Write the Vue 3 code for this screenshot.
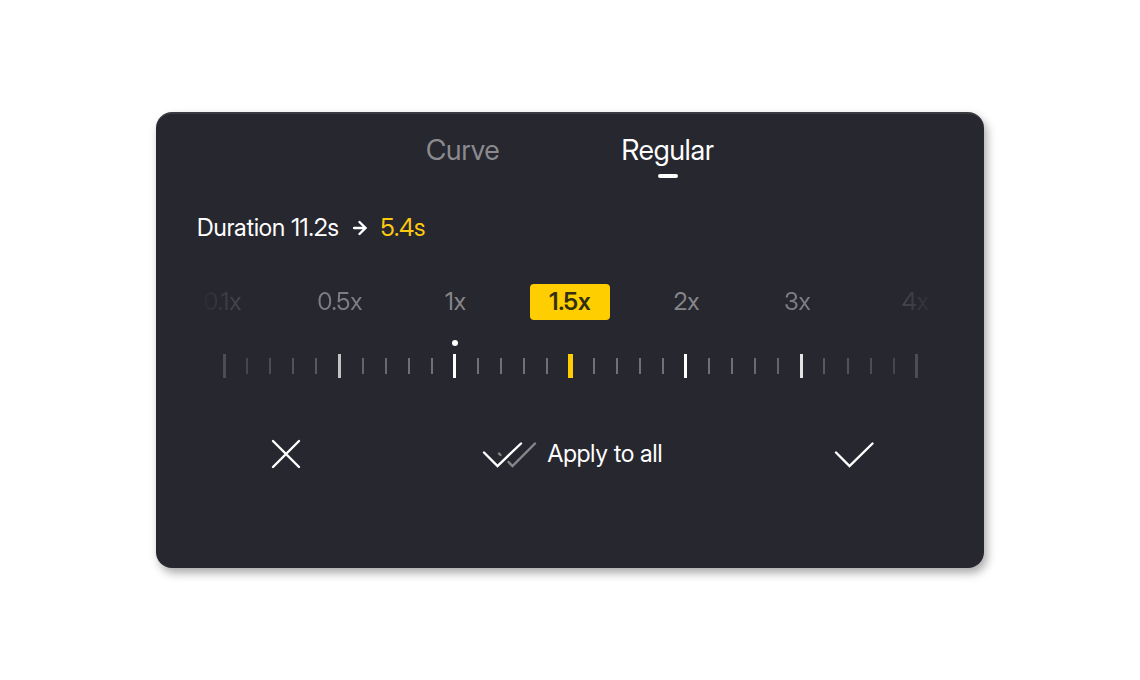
<script setup>
import { ref, computed } from 'vue'

const tabs = ['Curve', 'Regular']
const activeTab = ref('Regular')

const speeds = ['0.1x', '0.5x', '1x', '1.5x', '2x', '3x', '4x']
const speedOpacity = [1, 0.9, 1, 1, 1, 0.9, 1]
const position = ref(15)
const selected = computed(() => speeds[Math.round(position.value / 5)])

const majorOpacity = [0.18, 0.72, 1, 1, 1, 0.88, 0.18]
const minorOpacity = (i) => {
  const edge = Math.min(i, 30 - i)
  return Math.min(0.34, 0.12 + edge * 0.027)
}
const ticks = Array.from({ length: 31 }, (_, i) => ({
  index: i,
  major: i % 5 === 0,
  opacity: i % 5 === 0 ? majorOpacity[i / 5] : minorOpacity(i),
}))
</script>

<template>
  <main class="page">
    <section class="card" aria-label="Speed">
      <nav class="tabs">
        <button
          v-for="tab in tabs"
          :key="tab"
          type="button"
          class="tab"
          :class="{ active: tab === activeTab }"
          @click="activeTab = tab"
        >{{ tab }}</button>
      </nav>

      <p class="duration">
        <span>Duration 11.2s</span>
        <svg class="arrow" width="14" height="16" viewBox="0 0 14 16" aria-hidden="true">
          <path d="M1 8H12.5M6.5 2L12.5 8L6.5 14" />
        </svg>
        <span class="result">5.4s</span>
      </p>

      <div class="speeds">
        <button
          v-for="(speed, i) in speeds"
          :key="speed"
          type="button"
          class="speed"
          :class="{ selected: speed === selected, first: i === 0, last: i === 6 }"
          :style="{ opacity: speedOpacity[i] }"
          @click="position = i * 5"
        >{{ speed }}</button>
      </div>

      <div class="ruler">
        <span
          v-for="tick in ticks"
          :key="tick.index"
          class="cell"
        >
          <span
            class="tick"
            :class="{ major: tick.major, origin: tick.index === 10, current: tick.index === position }"
            :style="{ opacity: tick.opacity }"
          ></span>
        </span>
        <input v-model.number="position" class="range" type="range" min="0" max="30" aria-label="Playback speed" />
      </div>

      <div class="actions">
        <button type="button" class="action" aria-label="Cancel">
          <svg width="30" height="30" viewBox="0 0 30 30">
            <path d="M2 2L28 28M28 2L2 28" />
          </svg>
        </button>
        <button type="button" class="action">
          <svg width="60" height="28" viewBox="0 0 60 28" aria-hidden="true">
            <path class="dim" d="M21 13.5L22.5 15M30.5 22L34.5 26L57 3.5" />
            <path d="M6 12.5L19.5 26L43 3.5" />
          </svg>
          <span>Apply to all</span>
        </button>
        <button type="button" class="action" aria-label="Confirm">
          <svg width="40" height="28" viewBox="0 0 40 28">
            <path d="M2 12.5L15.5 26L38.5 3.5" />
          </svg>
        </button>
      </div>
    </section>
  </main>
</template>

<style>
body {
  margin: 0;
  background: #fff;
}
</style>

<style scoped>
.page {
  box-sizing: border-box;
  min-height: 100vh;
  padding: 24px;
  display: flex;
  align-items: center;
  justify-content: center;
  font-family: "Inter Display", Inter, "Liberation Sans", sans-serif;
  color: #fff;
}
.card {
  box-sizing: border-box;
  width: 100%;
  max-width: 828px;
  padding: 18px 0 98px;
  border-top: 2px solid #3b3b41;
  border-radius: 16px;
  background: #27272f;
  box-shadow: 3px 5px 10px rgba(0, 0, 0, 0.34);
}
button {
  margin: 0;
  padding: 0;
  border: 0;
  background: none;
  color: inherit;
  font: inherit;
  cursor: pointer;
}
.tabs {
  display: flex;
  justify-content: center;
  gap: 122px;
}
.tab {
  display: flex;
  flex-direction: column;
  align-items: center;
  gap: 6px;
  font-size: 28px;
  line-height: 36px;
  color: #8b8b8f;
}
.tab::after {
  content: "";
  width: 20px;
  height: 4px;
  border-radius: 2px;
}
.tab.active {
  color: #fff;
}
.tab.active::after {
  background: #fff;
}
.duration {
  display: flex;
  align-items: center;
  gap: 14px;
  margin: 34px 41px 0;
  font-size: 24px;
  line-height: 32px;
}
.result {
  color: #fccb10;
}
svg {
  display: block;
  fill: none;
  stroke: #fff;
  stroke-width: 2.4;
  stroke-linecap: round;
}
.speeds {
  display: grid;
  grid-template-columns: 113fr 122fr 109fr 120fr 113fr 109fr 127fr;
  justify-items: center;
  margin: 40px 5px 0 10px;
}
.speed {
  font-size: 24px;
  line-height: 36px;
  color: #86868a;
}
.speed.selected {
  width: 80px;
  border-radius: 4px;
  background: #ffce00;
  color: #33300f;
  font-weight: 600;
}
.speed.first,
.speed.last {
  color: transparent;
  background: linear-gradient(to right, #2c2c32, #48484c);
  background-clip: text;
}
.speed.last {
  background: linear-gradient(to right, #47474b, #303035);
  background-clip: text;
}
.ruler {
  position: relative;
  display: flex;
  justify-content: space-between;
  margin: 34px 65px 0 66px;
  height: 24px;
}
.cell {
  width: 4px;
  display: flex;
  align-items: center;
  justify-content: center;
}
.tick {
  position: relative;
  width: 2px;
  height: 16px;
  background: #fff;
}
.tick.major {
  width: 3px;
  height: 24px;
}
.tick.current {
  width: 5px;
  flex: none;
  background: #fc0;
}
.tick.origin::before {
  content: "";
  position: absolute;
  top: -14px;
  left: 50%;
  width: 6px;
  height: 6px;
  border-radius: 50%;
  background: #fff;
  transform: translateX(-50%);
}
.range {
  position: absolute;
  inset: 0;
  width: 100%;
  margin: 0;
  opacity: 0;
  cursor: pointer;
}
.actions {
  display: grid;
  grid-template-columns: 260fr 308fr 260fr;
  justify-items: center;
  margin-top: 60px;
  font-size: 24px;
  line-height: 32px;
}
.action {
  display: flex;
  align-items: center;
  gap: 10px;
}
.dim {
  stroke: #87878b;
}
</style>
